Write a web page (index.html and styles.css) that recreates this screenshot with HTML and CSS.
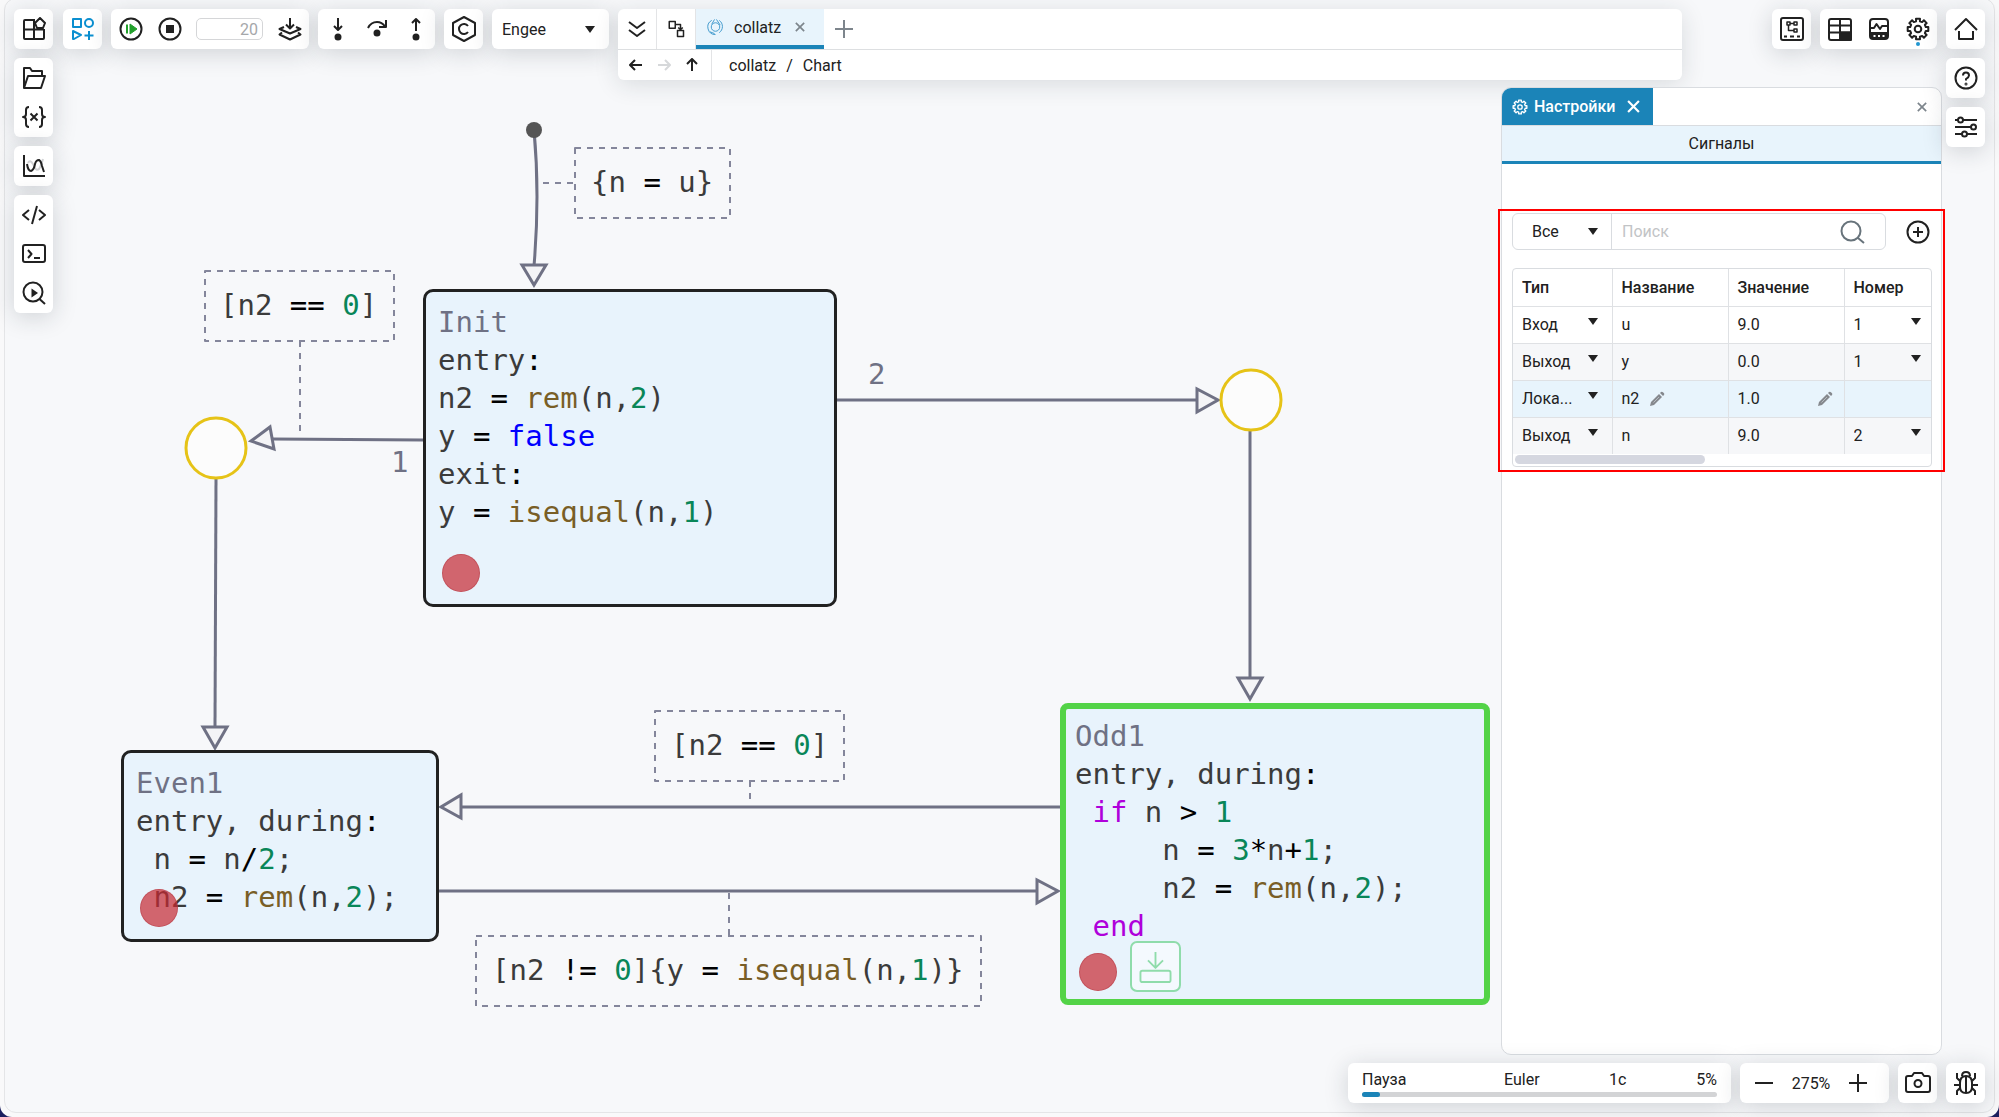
FILE: index.html
```html
<!DOCTYPE html>
<html lang="ru">
  <head>
    <meta charset="UTF-8" />
    <meta name="viewport" content="width=device-width, initial-scale=1.0" />
    <title>collatz - Engee</title>
    <link rel="stylesheet" href="styles.css">
  </head>
  <body>
    <svg width="0" height="0" class="symbols" aria-hidden="true">
      <symbol id="gear" viewBox="0 0 24 24">
        <path d="M10.1 4.2 10 1.7H14L13.9 4.2 16.2 5.1 17.9 3.3 20.7 6.1 18.9 7.8 19.8 10.1 22.3 10V14L19.8 13.9 18.9 16.2 20.7 17.9 17.9 20.7 16.2 18.9 13.9 19.8 14 22.3H10L10.1 19.8 7.8 18.9 6.1 20.7 3.3 17.9 5.1 16.2 4.2 13.9 1.7 14V10L4.2 10.1 5.1 7.8 3.3 6.1 6.1 3.3 7.8 5.1Z" />
        <circle cx="12" cy="12" r="3.3" />
      </symbol>
      <symbol id="pencil" viewBox="0 0 16 16">
        <path d="M1 15 2 11 10 3 13 6 5 14Z" fill="#85888d" stroke="none" />
        <path d="M11 2 12 1Q13 .4 14 1.2L15 2.2Q15.6 3 15 4L14 5Z" fill="#85888d" stroke="none" />
        <path d="M4.5 11.5 10 6" stroke="#d5dde3" stroke-width=".6" />
      </symbol>
    </svg>

    <div class="app">
      <!-- chart -->
      <main class="canvas">
        <svg class="links" width="1500" height="1100" aria-hidden="true">
          <g class="dashes">
            <rect x="575" y="148" width="155" height="70" />
            <path d="M543 183H575" />
            <rect x="205" y="271" width="189" height="70" />
            <path d="M300 341V437" />
            <rect x="655" y="711" width="189" height="70" />
            <path d="M750 781V801" />
            <rect x="476" y="936" width="505" height="70" />
            <path d="M729 893V936" />
          </g>
          <g class="lines">
            <path d="M534 130Q540 195 534 266" />
            <path d="M423 440 272 439" />
            <path d="M836 400H1197" />
            <path d="M216 479 215 727" />
            <path d="M1250 431V678" />
            <path d="M1060 807H461" />
            <path d="M439 891H1037" />
          </g>
          <g class="heads">
            <path d="M522 265H546L534 285Z" />
            <path d="M251 441 270 427 274 449Z" />
            <path d="M1197 389V412L1218 400Z" />
            <path d="M203 727H227L215 748Z" />
            <path d="M1238 678H1262L1250 699Z" />
            <path d="M461 795V818L441 807Z" />
            <path d="M1037 880V903L1058 891Z" />
          </g>
          <circle class="start" cx="534" cy="130" r="8" />
          <circle class="junction" cx="216" cy="448" r="30" />
          <circle class="junction" cx="1251" cy="400" r="30" />
        </svg>

        <div class="label label-start">{n <b>=</b> u}</div>
        <div class="label label-left">[n2 <b>==</b> <i>0</i>]</div>
        <div class="label label-mid">[n2 <b>==</b> <i>0</i>]</div>
        <div class="label label-low">[n2 <b>!=</b> <i>0</i>]{y <b>=</b> <em>isequal</em>(n,<i>1</i>)}</div>
        <div class="order order-1">1</div>
        <div class="order order-2">2</div>

        <div class="state state-init">
          <div class="line name">Init</div>
          <div class="line">entry<b>:</b></div>
          <div class="line">n2 <b>=</b> <em>rem</em>(n,<i>2</i>)</div>
          <div class="line">y <b>=</b> <span class="bool">false</span></div>
          <div class="line">exit<b>:</b></div>
          <div class="line">y <b>=</b> <em>isequal</em>(n,<i>1</i>)</div>
          <div class="breakpoint"></div>
        </div>

        <div class="state state-even">
          <div class="line name">Even1</div>
          <div class="line">entry, during<b>:</b></div>
          <div class="line"> n <b>=</b> n<b>/</b><i>2</i>;</div>
          <div class="line"> n2 <b>=</b> <em>rem</em>(n,<i>2</i>);</div>
          <div class="breakpoint"></div>
        </div>

        <div class="state state-odd">
          <div class="line name">Odd1</div>
          <div class="line">entry, during<b>:</b></div>
          <div class="line"> <span class="kw">if</span> n <b>&gt;</b> <i>1</i></div>
          <div class="line">     n <b>=</b> <i>3</i><b>*</b>n<b>+</b><i>1</i>;</div>
          <div class="line">     n2 <b>=</b> <em>rem</em>(n,<i>2</i>);</div>
          <div class="line"> <span class="kw">end</span></div>
          <div class="breakpoint"></div>
          <button class="step" aria-label="Шаг"><svg width="50" height="50" viewBox="0 0 50 50"><path d="M25 9V25M17 18 25 26 33 18" /><rect x="9" y="29" width="32" height="12" rx="2" /></svg></button>
        </div>
      </main>

      <!-- left column -->
      <nav class="side">
        <div class="group">
          <button aria-label="Блоки"><svg class="icon" viewBox="0 0 24 24"><path d="M13 3H3Q2 3 2 4V21Q2 22 3 22H21Q22 22 22 21V12M2 12.500H22M12 3V22" /><path d="M18 1 23 6 21 11 15 11 13 6Z" fill="#fff" /></svg></button>
        </div>
        <div class="group">
          <button aria-label="Файлы"><svg class="icon" viewBox="0 0 24 24"><path d="M2 22V2H8L10 5H20V9M2 22 6 10H23L19 22Z" /></svg></button>
          <button aria-label="Переменные"><svg class="icon" viewBox="0 0 24 24"><path d="M7 2Q4 2 4 5V9Q4 12 1 12Q4 12 4 15V19Q4 22 7 22M17 2Q20 2 20 5V9Q20 12 23 12Q20 12 20 15V19Q20 22 17 22M8.500 8.500 15.500 15.500M15.500 8.500 8.500 15.500" /></svg></button>
        </div>
        <div class="group">
          <button aria-label="Графики"><svg class="icon" viewBox="0 0 24 24"><path d="M6 9Q8 5 11 10Q14 18 17 15Q19 12 21 5" stroke="#d2d3d5" /><path d="M2 1V22H23" /><path d="M5 10Q6 17 9 17Q12 16 13 10Q14 6 17 6Q19 7 20 12L22 18" /></svg></button>
        </div>
        <div class="group">
          <button aria-label="Код"><svg class="icon" viewBox="0 0 24 24"><path d="M7 7 1 12 7 17M17 7 23 12 17 17M15 3 10 21" /></svg></button>
          <button aria-label="Командная строка"><svg class="icon" viewBox="0 0 24 24"><rect x="1" y="3" width="22" height="17" rx="2" /><path d="M6 8 9.500 12 6 16M12 16H18" /></svg></button>
          <button aria-label="Просмотр"><svg class="icon" viewBox="0 0 24 24"><circle cx="11" cy="11" r="9.500" /><path d="M17.500 18 23 23" /><path d="M9.500 7.500 16 12 9.500 16.500Z" fill="#212121" stroke="none" /></svg></button>
        </div>
      </nav>

      <div class="center">
        <header class="topbar">
          <div class="group row blue">
            <button aria-label="Библиотека"><svg class="icon" viewBox="0 0 24 24"><rect x="2" y="2" width="8" height="8" /><circle cx="18" cy="6" r="4" /><path d="M2 14 10 18 3 22H2ZM18 14V23M13.500 18.500H22.500" /></svg></button>
          </div>
          <div class="group row">
            <button aria-label="Продолжить"><svg class="icon" viewBox="0 0 24 24"><circle cx="12" cy="12" r="10.500" /><path d="M11 7 18 12 11 17Z" fill="#22a02c" stroke="#22a02c" stroke-width="1" /><path d="M8 7.500V16.500" stroke="#22a02c" /></svg></button>
            <button aria-label="Стоп"><svg class="icon" viewBox="0 0 24 24"><circle cx="12" cy="12" r="10.500" /><rect x="8" y="8" width="8" height="8" fill="#212121" stroke="none" /></svg></button>
            <input class="time" type="text" value="20" aria-label="Время моделирования" />
            <button aria-label="Сборка"><svg class="icon" viewBox="0 0 24 24"><path d="M12 1V11M8 7.500 12 11.500 16 7.500M6 10 1.500 12 12 16.500 22.500 12 18 10M4 15.500 1.500 17.500 12 22.500 22.500 17.500 20 15.500" /></svg></button>
          </div>
          <div class="group row">
            <button aria-label="Шаг с заходом"><svg class="icon" viewBox="0 0 24 24"><path d="M12 1V12M8 9 12 13 16 9" /><circle cx="12" cy="20" r="2.500" fill="#212121" /></svg></button>
            <button aria-label="Шаг с обходом"><svg class="icon" viewBox="0 0 24 24"><path d="M3 11Q6 5 12 5Q17 5 20 9.500M21 3V10H14" /><circle cx="12" cy="16" r="2.500" fill="#212121" /></svg></button>
            <button aria-label="Шаг с выходом"><svg class="icon" viewBox="0 0 24 24"><path d="M12 14V2M8 6 12 2 16 6" /><circle cx="12" cy="20" r="2.500" fill="#212121" /></svg></button>
          </div>
          <div class="group row">
            <button aria-label="Генерация кода"><svg class="icon big" viewBox="0 0 28 28"><path d="M14 2 25 8V20L14 26 3 20V8Z" /><path d="M18 11A5 5 0 1 0 18 17" /></svg></button>
          </div>
          <div class="group row pick kernel">
            <select aria-label="Ядро"><option>Engee</option></select>
          </div>

          <div class="tabs">
            <div class="tab-row">
              <button class="tab-tool" aria-label="Свернуть"><svg class="icon" viewBox="0 0 24 24"><path d="M4 5 12 11 20 5M4 13 12 19 20 13" /></svg></button>
              <button class="tab-tool" aria-label="Дерево модели"><svg class="icon small" viewBox="0 0 24 24"><rect x="3" y="2" width="8" height="9" /><rect x="14" y="14" width="8" height="8" /><path d="M11 6H18V13M15 10 18 13 21 10" /></svg></button>
              <div class="tab">
                <svg class="swirl" viewBox="0 0 18 18" aria-hidden="true"><path d="M5 2A8 8 0 0 0 9 17M13 2A8 8 0 0 1 13 15" /><circle cx="9" cy="9" r="4.500" /><path d="M5 6 8 1M10 1 14 7M3 14 8 16" /></svg>
                <a href="#">collatz</a>
                <button class="close" aria-label="Закрыть"><svg width="10" height="10" viewBox="0 0 12 12"><path d="M1 1 11 11M11 1 1 11" /></svg></button>
              </div>
              <button class="add" aria-label="Новая вкладка"><svg width="20" height="20" viewBox="0 0 20 20"><path d="M10 1V19M1 10H19" /></svg></button>
            </div>
            <div class="crumbs">
              <div class="arrows">
                <button aria-label="Назад"><svg width="14" height="14" viewBox="0 0 14 14"><path d="M13 7H1M6 2 1 7 6 12" /></svg></button>
                <button aria-label="Вперёд" disabled><svg width="14" height="14" viewBox="0 0 14 14"><path d="M1 7H13M8 2 13 7 8 12" /></svg></button>
                <button aria-label="Вверх"><svg width="14" height="14" viewBox="0 0 14 14"><path d="M7 13V1M2 6 7 1 12 6" /></svg></button>
              </div>
              <a href="#">collatz</a><span>/</span><a href="#">Chart</a>
            </div>
          </div>

          <div class="group row push">
            <button aria-label="Схема"><svg class="icon" viewBox="0 0 24 24"><rect x="1" y="1" width="22" height="22" rx="2" /><path d="M4 19.500H7M10 19.500H14M17 19.500H20" /><g stroke-width="1.500"><rect x="7" y="5" width="3" height="3" /><rect x="14" y="5" width="3" height="3" /><rect x="14" y="12" width="3" height="3" /><path d="M10 6.500H14M8.500 8V13.500H14" /></g></svg></button>
          </div>
          <div class="group row">
            <button aria-label="Таблица"><svg class="icon" viewBox="0 0 24 24"><rect x="1" y="2" width="22" height="21" rx="2" /><path d="M12 2V23M1 8.500H23M1 15.500H23" /><path d="M12 15.500H23V23H12Z" fill="#212121" /></svg></button>
            <button aria-label="Осциллограф"><svg class="icon" viewBox="0 0 24 24"><rect x="3" y="2" width="18" height="20" rx="3" /><path d="M4 11H7L9.500 7 13 12 15 9H20M3 16H21" /><path d="M4 17H20V21H4Z" fill="#212121" stroke="none" /><path d="M6.500 19H8.500M11 19H13M15.500 19H17.500" stroke="#fff" /></svg></button>
            <button class="current" aria-label="Настройки"><svg class="icon"><use href="#gear" /></svg></button>
          </div>
        </header>

        <section class="panel">
          <div class="panel-head">
            <div class="panel-tab">
              <svg class="tiny"><use href="#gear" /></svg>
              <span>Настройки</span>
              <button aria-label="Закрыть настройки"><svg width="13" height="13" viewBox="0 0 12 12"><path d="M1 1 11 11M11 1 1 11" /></svg></button>
            </div>
            <button class="close" aria-label="Закрыть панель"><svg width="10" height="10" viewBox="0 0 12 12"><path d="M1 1 11 11M11 1 1 11" /></svg></button>
          </div>
          <h2>Сигналы</h2>
          <div class="signals">
            <div class="filter">
              <div class="search">
                <div class="pick"><select aria-label="Тип сигнала"><option>Все</option></select></div>
                <input type="text" placeholder="Поиск" aria-label="Поиск" />
                <svg width="26" height="26" viewBox="0 0 26 26" aria-hidden="true"><circle cx="12" cy="12" r="9.500" /><path d="M19 19 25 24" /></svg>
              </div>
              <button aria-label="Добавить"><svg class="icon" viewBox="0 0 24 24"><circle cx="12" cy="12" r="10.500" /><path d="M12 7V17M7 12H17" /></svg></button>
            </div>
            <div class="table-box">
              <table>
                <thead>
                  <tr><th class="type">Тип</th><th class="wide">Название</th><th class="wide">Значение</th><th>Номер</th></tr>
                </thead>
                <tbody>
                  <tr>
                    <td><div class="pick"><select aria-label="Тип"><option>Вход</option></select></div></td>
                    <td>u</td><td>9.0</td>
                    <td><div class="pick"><select aria-label="Номер"><option>1</option></select></div></td>
                  </tr>
                  <tr class="odd">
                    <td><div class="pick"><select aria-label="Тип"><option>Выход</option></select></div></td>
                    <td>y</td><td>0.0</td>
                    <td><div class="pick"><select aria-label="Номер"><option>1</option></select></div></td>
                  </tr>
                  <tr class="selected">
                    <td><div class="pick"><select aria-label="Тип"><option>Лока...</option></select></div></td>
                    <td><div class="edit near">n2 <svg width="16" height="16"><use href="#pencil" /></svg></div></td>
                    <td><div class="edit">1.0 <svg width="16" height="16"><use href="#pencil" /></svg></div></td>
                    <td></td>
                  </tr>
                  <tr class="odd">
                    <td><div class="pick"><select aria-label="Тип"><option>Выход</option></select></div></td>
                    <td>n</td><td>9.0</td>
                    <td><div class="pick"><select aria-label="Номер"><option>2</option></select></div></td>
                  </tr>
                </tbody>
              </table>
              <div class="scroll"></div>
            </div>
          </div>
        </section>

        <footer class="status">
          <div class="group progress">
            <div class="run"><span>Пауза</span><span>Euler</span><span>1с</span><span>5%</span></div>
            <div class="bar"><div class="fill" style="width: 5%"></div></div>
          </div>
          <div class="group row zoom">
            <button aria-label="Уменьшить"><svg width="20" height="20" viewBox="0 0 20 20"><path d="M1 10H19" /></svg></button>
            <span>275%</span>
            <button aria-label="Увеличить"><svg width="20" height="20" viewBox="0 0 20 20"><path d="M1 10H19M10 1V19" /></svg></button>
          </div>
          <div class="group row">
            <button aria-label="Снимок"><svg class="camera" viewBox="0 0 26 24"><path d="M3 5H7L9 2H17L19 5H23Q25 5 25 7V19Q25 21 23 21H3Q1 21 1 19V7Q1 5 3 5Z" /><circle cx="13" cy="12.500" r="3.500" /></svg></button>
          </div>
        </footer>
      </div>

      <!-- right column -->
      <nav class="side">
        <div class="group">
          <button aria-label="Домой"><svg class="icon" viewBox="0 0 24 24"><path d="M1 13 12 2 23 13M5 14V22H19V14" /></svg></button>
        </div>
        <div class="group">
          <button aria-label="Справка"><svg class="icon" viewBox="0 0 24 24"><circle cx="12" cy="12" r="10.500" /><path d="M9 9.500Q9 6.500 12 6.500T15 9.500Q15 11 12 13V14.500" /><circle cx="12" cy="18" r=".5" /></svg></button>
        </div>
        <div class="group">
          <button aria-label="Параметры"><svg class="icon" viewBox="0 0 24 24"><path d="M1 5H4M9 5H23M1 12H17M1 19H8M13 19H23" /><circle cx="6.500" cy="5" r="2.500" /><circle cx="19.500" cy="12" r="2.500" /><circle cx="10.500" cy="19" r="2.500" /></svg></button>
        </div>
        <div class="group last">
          <button aria-label="Отладка"><svg class="icon" viewBox="0 0 24 24"><path d="M8 5Q8 1 12 1T16 5M12 6V22M12 5Q6 5 6 12V16Q6 22 12 22T18 16V12Q18 5 12 5ZM6 10 3 7V2M18 10 21 7V2M6 14H0M18 14H24M6 17 3 20V24M18 17 21 20V24" /></svg></button>
        </div>
      </nav>
    </div>
  </body>
</html>
```

FILE: styles.css
```css
* {
  box-sizing: border-box;
}
body {
  margin: 0;
  background: linear-gradient(#f7f7f7 50%, #1b1f5e 50%);
  font-family: Roboto, "Noto Sans", sans-serif;
  font-size: 16px;
  color: #212121;
}
button,
select,
input {
  font: inherit;
  color: inherit;
  border: none;
  background: none;
  padding: 0;
  margin: 0;
}
button {
  display: flex;
  align-items: center;
  justify-content: center;
  cursor: pointer;
}
a {
  color: inherit;
  text-decoration: none;
}
svg {
  fill: none;
  stroke: currentColor;
  stroke-width: 2;
  stroke-linejoin: round;
}
.symbols {
  position: absolute;
}
.icon {
  width: 24px;
  height: 24px;
}
.icon.big {
  width: 28px;
  height: 28px;
}
.icon.small {
  width: 18px;
  height: 18px;
}
.camera {
  width: 26px;
  height: 24px;
}

.app {
  position: relative;
  display: flex;
  height: 100vh;
  padding: 9px 14px 14px;
  background: #f9f9fa;
  border-radius: 0 0 12px 12px;
  overflow: hidden;
}
.canvas {
  position: absolute;
  inset: -2px 4px 4px;
  background: #f7f8fa;
  border: 1px solid #e4e5e7;
  border-radius: 12px;
}

/* floating button groups */
.group {
  position: relative;
  background: #fff;
  border-radius: 6px;
  box-shadow: 0 4px 24px rgba(30, 40, 50, 0.18);
}
.group button {
  width: 39px;
  height: 40px;
}
.row {
  display: flex;
  align-items: center;
}
.side {
  display: flex;
  flex-direction: column;
  gap: 9px;
  width: 39px;
}
.side .group button + button {
  margin-top: -1px;
}
.side .last {
  margin-top: auto;
}
.blue {
  color: #0b8fd0;
}
.center {
  flex: 1;
  min-width: 0;
  display: flex;
  flex-direction: column;
  margin: 0 4px 0 10px;
}
.topbar {
  display: flex;
  align-items: flex-start;
  gap: 9px;
  margin-right: 5px;
}
.push {
  margin-left: auto;
}
.time {
  width: 67px;
  height: 22px;
  margin: 0 7px;
  padding: 0 4px;
  border: 1px solid #d5d6d8;
  border-radius: 5px;
  text-align: right;
  color: #a5a7aa;
}
.current::after {
  content: "";
  position: absolute;
  bottom: 3px;
  width: 4px;
  height: 4px;
  border-radius: 2px;
  background: #2196d0;
}

/* select with its own arrow */
.pick {
  position: relative;
  display: flex;
  align-items: center;
}
.pick select {
  width: 100%;
  appearance: none;
  outline: none;
}
.pick::after {
  content: "";
  position: absolute;
  right: 0;
  border: 5px solid transparent;
  border-top: 7px solid #212121;
  border-bottom: none;
  pointer-events: none;
}
.kernel {
  width: 117px;
  height: 40px;
  padding: 0 10px;
}
.kernel::after {
  right: 14px;
}

/* model tabs */
.tabs {
  position: relative;
  flex: 0 1 1064px;
  background: #fff;
  border-radius: 6px;
  box-shadow: 0 4px 24px rgba(30, 40, 50, 0.14);
}
.tab-row {
  display: flex;
  height: 41px;
  border-bottom: 1px solid #dddfe1;
}
.tab-tool {
  width: 39px;
  border-right: 1px solid #e3e4e6;
}
.tab {
  display: flex;
  align-items: center;
  gap: 10px;
  padding: 0 18px 0 11px;
  background: #e8f4fc;
  border-bottom: 4px solid #1b84b8;
}
.swirl {
  width: 17px;
  height: 18px;
  color: #3c97cb;
  stroke-width: 1;
}
.close,
.add {
  color: #7d858c;
}
.tab .close {
  width: 12px;
  height: 20px;
  margin-left: 3px;
}
.add {
  width: 40px;
}
.crumbs {
  display: flex;
  align-items: center;
  gap: 10px;
  height: 30px;
}
.arrows {
  display: flex;
  align-items: center;
  gap: 14px;
  width: 94px;
  height: 30px;
  margin-right: 7px;
  padding-left: 11px;
  border-right: 1px solid #e3e4e6;
}
.arrows button:disabled {
  color: #d6d8da;
}

/* settings panel */
.panel {
  position: relative;
  flex: 1;
  align-self: flex-end;
  width: 441px;
  margin: 7px 0 8px;
  background: #fff;
  border: 1px solid #d9dce0;
  border-radius: 10px;
}
.panel-head {
  display: flex;
  justify-content: space-between;
  height: 38px;
  border-bottom: 1px solid #d9dce0;
}
.panel-tab {
  display: flex;
  align-items: center;
  gap: 6px;
  padding: 0 13px 0 10px;
  background: #1b84b8;
  border-radius: 9px 0 0 0;
  color: #fff;
  font-weight: 500;
}
.panel-tab button {
  margin-left: 6px;
}
.tiny {
  width: 16px;
  height: 16px;
}
.panel-head .close {
  width: 38px;
}
.panel h2 {
  margin: 0;
  height: 38px;
  line-height: 36px;
  background: #e8f4fc;
  border-bottom: 3px solid #1b84b8;
  text-align: center;
  font-size: 16px;
  font-weight: 400;
}
.signals {
  margin: 45px -4px 0;
  padding: 2px 11px 3px 12px;
  border: 2px solid #f00;
}
.filter {
  display: flex;
  justify-content: space-between;
  align-items: center;
  padding-right: 2px;
}
.search {
  flex: 1;
  display: flex;
  align-items: center;
  height: 37px;
  margin-right: 20px;
  padding-right: 20px;
  border: 1px solid #d9dce0;
  border-radius: 6px;
  color: #67737b;
}
.search .pick {
  width: 99px;
  height: 100%;
  padding: 0 14px 0 19px;
  border-right: 1px solid #d9dce0;
  color: #212121;
}
.search .pick::after {
  right: 13px;
}
.search input {
  flex: 1;
  min-width: 0;
  padding-left: 10px;
}
.search input::placeholder {
  color: #c2c4c6;
}
.table-box {
  margin-top: 18px;
  padding-bottom: 2px;
  border: 1px solid #d9dce0;
  border-radius: 4px;
}
table {
  width: 100%;
  table-layout: fixed;
  border-collapse: collapse;
}
th,
td {
  height: 37px;
  padding: 0 9px;
  border-right: 1px solid #dfe1e4;
  border-bottom: 1px solid #dfe1e4;
  text-align: left;
}
th {
  font-weight: 500;
}
th:last-child,
td:last-child {
  padding-right: 5px;
  border-right: none;
}
tr:last-child td {
  border-bottom: none;
}
.type {
  width: 99px;
}
.wide {
  width: 116px;
}
.odd {
  background: #f6f7f9;
}
.selected {
  background: #e8f4fc;
}
td .pick::after {
  right: 5px;
  top: 3px;
}
.edit {
  display: flex;
  justify-content: space-between;
  align-items: center;
  padding-right: 2px;
}
.near {
  justify-content: flex-start;
  gap: 10px;
}
.scroll {
  width: 190px;
  height: 9px;
  margin: 1px 2px 0;
  border-radius: 5px;
  background: #d5d7e0;
}

/* status line */
.status {
  display: flex;
  justify-content: flex-end;
  gap: 9px;
  margin-right: 5px;
}
.progress {
  width: 383px;
  height: 40px;
  padding: 7px 14px;
}
.run {
  display: grid;
  grid-template-columns: 142px 105px 1fr auto;
  line-height: 20px;
}
.bar {
  height: 5px;
  margin-top: 2px;
  border-radius: 3px;
  background: #d3d4d6;
}
.fill {
  height: 5px;
  border-radius: 3px;
  background: #1b84b8;
}
.zoom {
  justify-content: space-between;
  width: 149px;
  padding: 0 11px 0 4px;
}

/* chart items */
.links {
  position: absolute;
  left: -5px;
  top: 1px;
}
.dashes {
  stroke: #84869b;
  stroke-dasharray: 6 6;
}
.lines {
  stroke: #6f7184;
  stroke-width: 3;
}
.heads {
  fill: #f4f4f6;
  stroke: #6f7184;
  stroke-width: 3;
  stroke-linejoin: miter;
}
.start {
  fill: #555;
  stroke: none;
}
.junction {
  fill: #fcfcfc;
  stroke: #e6c317;
  stroke-width: 3;
}
.label,
.order,
.state {
  position: absolute;
  font-family: "DejaVu Sans Mono", monospace;
  font-size: 29px;
  line-height: 38px;
  color: #3b3b3b;
}
.label,
.line {
  white-space: pre;
}
.label b,
.state b {
  font-weight: 400;
  color: #000;
}
.label i,
.state i {
  font-style: normal;
  color: #098658;
}
.label em,
.state em {
  font-style: normal;
  color: #795e26;
}
.kw {
  color: #af00db;
}
.bool {
  color: #00f;
}
.order,
.name {
  color: #6f7184;
}
.label-start {
  left: 586px;
  top: 164px;
}
.label-left {
  left: 215px;
  top: 287px;
}
.label-mid {
  left: 666px;
  top: 727px;
}
.label-low {
  left: 487px;
  top: 952px;
}
.order-1 {
  left: 386px;
  top: 444px;
}
.order-2 {
  left: 863px;
  top: 356px;
}
.state {
  padding: 11px 12px;
  background: #e8f3fc;
  border: 3px solid #212121;
  border-radius: 10px;
}
.state-init {
  left: 418px;
  top: 290px;
  width: 414px;
  height: 318px;
}
.state-even {
  left: 116px;
  top: 751px;
  width: 318px;
  height: 192px;
}
.state-odd {
  left: 1055px;
  top: 704px;
  width: 430px;
  height: 302px;
  padding: 8px 9px;
  border: 6px solid #53d347;
  border-radius: 8px;
}
.breakpoint {
  position: absolute;
  left: 16px;
  bottom: 12px;
  width: 38px;
  height: 38px;
  border: 1px solid rgba(180, 60, 70, 0.5);
  border-radius: 50%;
  background: rgba(200, 40, 50, 0.7);
}
.state-odd .breakpoint {
  left: 13px;
  bottom: 8px;
}
.step {
  position: absolute;
  left: 64px;
  bottom: 7px;
  width: 51px;
  height: 51px;
  border: 2px solid #8fdcab;
  border-radius: 7px;
  background: rgba(255, 255, 255, 0.5);
  color: #8fdcab;
}
```
